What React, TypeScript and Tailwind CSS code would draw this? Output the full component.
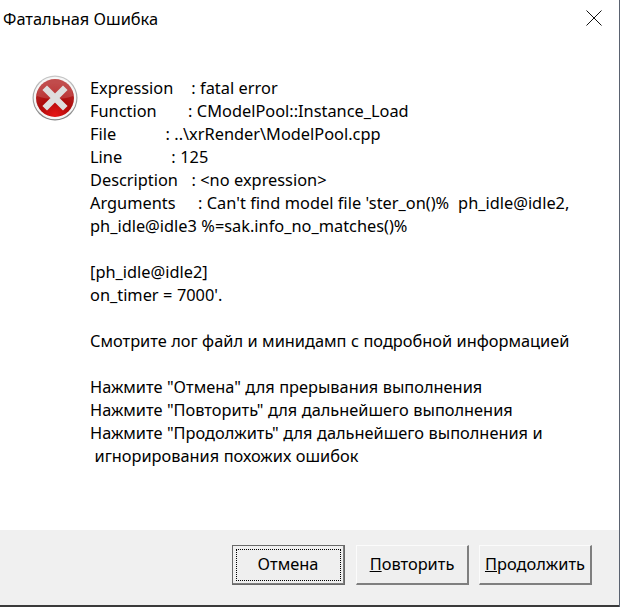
const lines = [
  "Expression    : fatal error",
  "Function       : CModelPool::Instance_Load",
  "File           : ..\\xrRender\\ModelPool.cpp",
  "Line           : 125",
  "Description   : <no expression>",
  "Arguments     : Can't find model file 'ster_on()%  ph_idle@idle2,",
  "ph_idle@idle3 %=sak.info_no_matches()%",
  "",
  "[ph_idle@idle2]",
  "on_timer = 7000'.",
  "",
  "Смотрите лог файл и минидамп с подробной информацией",
  "",
  "Нажмите \"Отмена\" для прерывания выполнения",
  "Нажмите \"Повторить\" для дальнейшего выполнения",
  "Нажмите \"Продолжить\" для дальнейшего выполнения и",
  " игнорирования похожих ошибок",
];

function ErrorIcon() {
  return (
    <svg width="46" height="46" viewBox="0 0 46 46" className="shrink-0 mt-[-1px]">
      <defs>
        <linearGradient id="rim" x1="0" y1="0" x2="0" y2="1">
          <stop offset="0" stopColor="#c8c8c8" />
          <stop offset="1" stopColor="#808080" />
        </linearGradient>
        <radialGradient id="red" cx="0.5" cy="0.95" r="0.85">
          <stop offset="0" stopColor="#e61616" />
          <stop offset="0.5" stopColor="#ad0a0a" />
          <stop offset="1" stopColor="#b52a2a" />
        </radialGradient>
      </defs>
      <circle cx="23" cy="23" r="22.5" fill="url(#rim)" />
      <circle cx="23" cy="23" r="21.3" fill="#f6f6f6" />
      <circle cx="23" cy="23" r="19" fill="url(#red)" />
      <path d="M5 21a18 18 0 0 1 36 0c-9 4-27 4-36 0z" fill="#fff" opacity="0.16" />
      <path d="M15 15l16 16M31 15L15 31" stroke="#dedede" strokeWidth="6.5" strokeLinecap="square" />
    </svg>
  );
}

function DialogButton({ label, hotkey, focused, className }: { label: string; hotkey?: string; focused?: boolean; className?: string }) {
  return (
    <button
      className={
        "w-[113px] h-[40px] bg-[#efefef] text-[16.4px] text-black border-t border-l border-t-[#fbfbfb] border-l-[#fbfbfb] border-r-2 border-b-2 border-r-[#7f7f7f] border-b-[#7f7f7f] flex items-center justify-center " +
        (focused ? "outline-1 outline-[#696969] -outline-offset-1 " : "") +
        (className ?? "")
      }
    >
      <span className={focused ? "w-[105px] h-[32px] border border-dotted border-black flex items-center justify-center" : ""}>
        {hotkey && <span className="underline">{hotkey}</span>}
        {label}
      </span>
    </button>
  );
}

export default function App() {
  return (
    <div className="w-[620px] h-[607px] flex flex-col bg-white border-r border-r-[#5a6270] font-['Noto_Sans','Open_Sans',sans-serif] text-black overflow-hidden">
      <div className="h-[40px] flex items-start justify-between pl-[3px] pr-[17px] text-[16.4px]">
        <span className="mt-[7px]">Фатальная Ошибка</span>
        <svg width="16" height="16" viewBox="0 0 16 16" className="mt-[10px]">
          <path d="M0.5 0.5l15 15M15.5 0.5l-15 15" stroke="#111" strokeWidth="1" fill="none" />
        </svg>
      </div>
      <div className="flex-1 flex pl-[32px] pt-[36px] gap-[12px]">
        <ErrorIcon />
        <div className="pt-[1px] text-[16.35px] leading-[23px] [word-spacing:0.23px]">
          {lines.map((line, i) => (
            <div key={i} className="h-[23px] whitespace-pre">{line}</div>
          ))}
        </div>
      </div>
      <div className="h-[75px] bg-[#f0f0f0] flex items-start pl-[232px] pt-[15px]">
        <DialogButton label="Отмена" focused />
        <DialogButton hotkey="П" label="овторить" className="ml-[11px]" />
        <DialogButton hotkey="П" label="родолжить" className="ml-[10px]" />
      </div>
      <div className="h-[2px] bg-[#3a3a3a]" />
    </div>
  );
}
